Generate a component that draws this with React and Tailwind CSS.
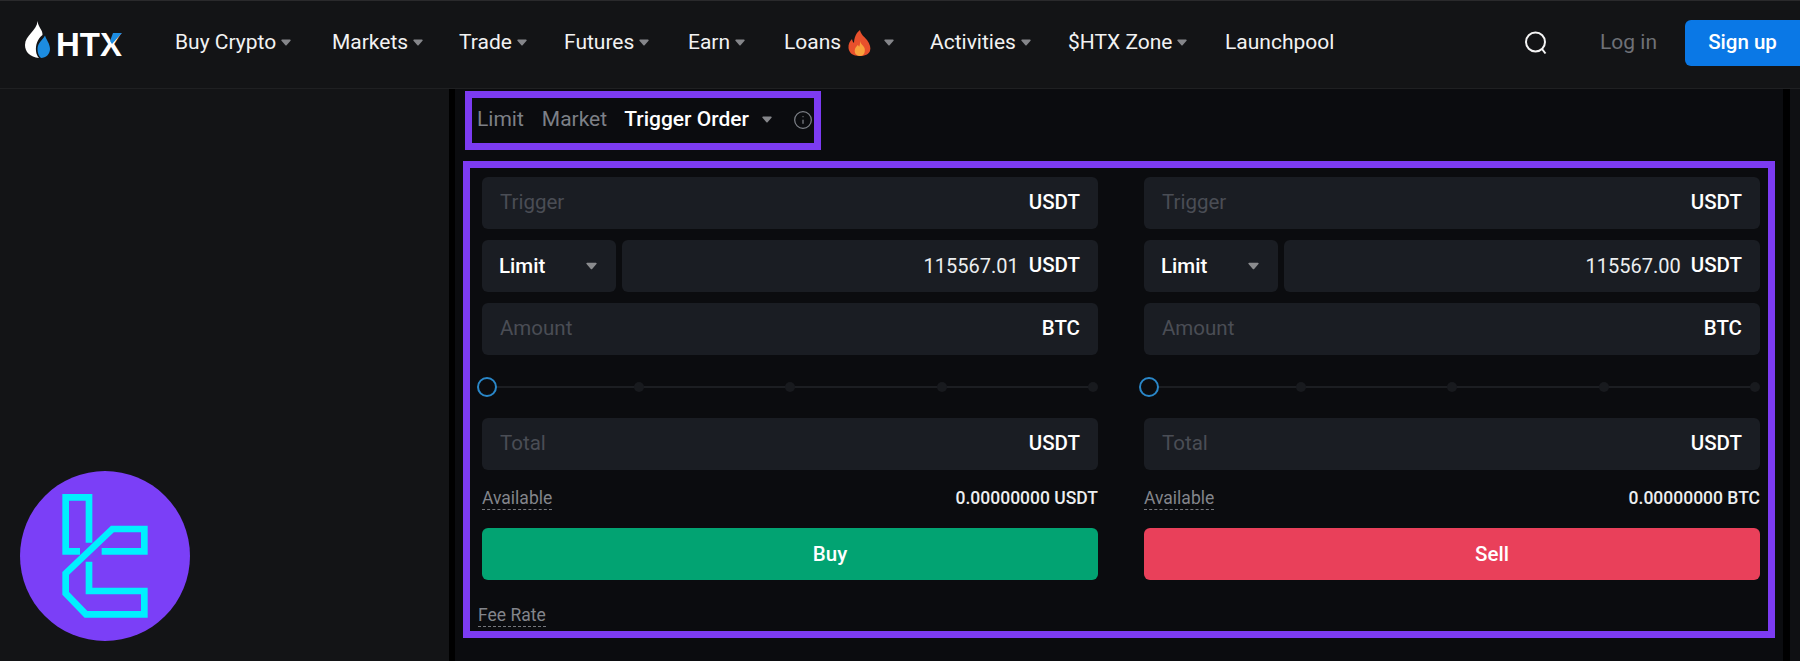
import { Info } from "lucide-react";

const navItems = [
  { label: "Buy Crypto", caret: true, width: "w-[157px]" },
  { label: "Markets", caret: true, width: "w-[127px]" },
  { label: "Trade", caret: true, width: "w-[105px]" },
  { label: "Futures", caret: true, width: "w-[124px]" },
  { label: "Earn", caret: true, width: "w-[96px]" },
  { label: "Loans", caret: true, hot: true, width: "w-[146px]" },
  { label: "Activities", caret: true, width: "w-[138px]" },
  { label: "$HTX Zone", caret: true, width: "w-[157px]" },
  { label: "Launchpool", width: "w-[110px]" },
];

function Caret({ className }) {
  return (
    <svg viewBox="0 0 10 7" className={className} fill="currentColor">
      <path d="M1 0.5h8a.7.7 0 0 1 .5 1.2L5.6 6.2a.8.8 0 0 1-1.2 0L.5 1.7A.7.7 0 0 1 1 .5z" />
    </svg>
  );
}

function Flame() {
  return (
    <svg viewBox="0 0 23 26" className="ml-[7px] h-[26px] w-[23px]">
      <path fill="#e8502c" d="M12 0c1 5 4 6 7 10 3 4 4 8 3 11-1 3-5 5-10.500 5C5 26 1 23 .5 18c-.4-4 1.500-7 3.500-9 .3 2 1 3 2 4C6 8 8 3 12 0z" />
      <path fill="#f9a23c" d="M12 11c.5 3 3 4 4.500 7 1 3 0 8-4.500 8s-6-4-5-7c.5-2 2-2.500 2.500-4 1 .5 1.500 1 1.500 2 .8-1.500 1.200-3.500 1-6z" />
    </svg>
  );
}

function Logo() {
  return (
    <div className="flex items-center">
      <svg viewBox="0 0 25 37" className="mt-[-6px] h-[37px] w-[25px]">
        <path fill="#ffffff" d="M12.500 0C13 6 18 9 17.500 14 12.500 18 10.500 24 11 30c.3 3 1.500 5.500 3 7C5 36 0 31 0 24 0 14 12 10 12.500 0z" />
        <path fill="#1c8ce0" d="M20 14.500c1 4 5 8 5 13.500 0 5-4 9-9 9-2.500-2-3.500-5.500-3.500-9 0-6 5-9 7.500-13.500z" />
      </svg>
      <div className="relative ml-[6px] mt-[4px] font-['Liberation_Sans',sans-serif] text-[33px] leading-[32px] font-bold text-white">
        HTX
        <svg viewBox="0 0 12 12" className="absolute right-0 top-[4px] h-3 w-3">
          <path fill="#1c8ce0" d="M3 0h9L2 11 0 8z" />
        </svg>
      </div>
    </div>
  );
}

function Field({ placeholder, value, unit, className = "" }) {
  return (
    <div className={`flex h-[52px] items-center justify-between rounded-md bg-[#1a1d23] pb-[2px] pl-[18px] pr-[18px] text-[20.500px] ${className}`}>
      {placeholder ? <span className="text-[#4a4d55]">{placeholder}</span> : <span />}
      <div className="flex items-center gap-[10px]">
        {value && <span className="pt-[2px] text-[20px] text-[#eceef0]">{value}</span>}
        <span className="font-medium text-white">{unit}</span>
      </div>
    </div>
  );
}

function Slider() {
  return (
    <div className="relative flex h-[63px] items-center justify-between">
      <div className="absolute left-[5px] right-[5px] top-[31px] h-[2px] bg-[#1c1e22]" />
      <div className="relative flex w-2.5 items-center justify-center">
        <div className="size-5 shrink-0 rounded-full border-2 border-[#2a87c8] bg-[#0b0c0f]" />
      </div>
      {[0, 1, 2, 3].map((i) => (
        <div key={i} className="relative size-2.5 rounded-full bg-[#181a1e]" />
      ))}
    </div>
  );
}

function OrderColumn({ price, unit, balance, action, actionClass }) {
  return (
    <div className="flex flex-col">
      <div className="flex flex-col gap-[11px]">
        <Field placeholder="Trigger" unit="USDT" />
        <div className="flex gap-[6px]">
          <div className="flex h-[52px] w-[134px] shrink-0 items-center justify-between rounded-md bg-[#1a1d23] pl-[17px] pr-[19px] text-[20.500px] font-medium text-white">
            Limit
            <Caret className="h-[8px] w-[11px] text-[#8a8b8e]" />
          </div>
          <Field value={price} unit="USDT" className="flex-1" />
        </div>
        <Field placeholder="Amount" unit={unit} />
      </div>
      <Slider />
      <Field placeholder="Total" unit="USDT" />
      <div className="mt-[17px] flex items-start justify-between">
        <span className="border-b border-dashed border-[#74767c] text-[17.500px] leading-[22px] text-[#83858b]">Available</span>
        <span className="text-[17.500px] leading-[22px] font-medium text-[#eceef0]">{balance}</span>
      </div>
      <button className={`mt-[18px] flex h-[52px] items-center justify-center rounded-md pl-[80px] text-[20.500px] font-medium text-white ${actionClass}`}>
        {action}
      </button>
    </div>
  );
}

export default function App() {
  return (
    <div className="flex h-[661px] w-[1800px] flex-col overflow-hidden bg-[#0f1013] font-['Roboto',sans-serif]">
      <header className="flex h-[89px] shrink-0 items-center border-t border-b border-t-[#2a2a2c] border-b-[#1f2022] bg-[#131416] pb-[4px] pl-[25px]">
        <Logo />
        <nav className="ml-[53px] flex items-center text-[21px] text-[#f2f2f2]">
          {navItems.map((item) => (
            <div key={item.label} className={`flex items-center ${item.width}`}>
              {item.label}
              {item.hot && <Flame />}
              {item.caret && <Caret className={`h-[7px] w-[10px] text-[#85868a] ${item.hot ? "ml-[13px]" : "ml-[5px]"}`} />}
            </div>
          ))}
        </nav>
        <div className="ml-auto flex items-center">
          <svg viewBox="0 0 24 24" className="h-6 w-6" fill="none" stroke="#f5f5f5" strokeWidth="2">
            <circle cx="11.500" cy="11" r="9.500" />
            <path d="M18 18l3.500 4.500" />
          </svg>
          <span className="ml-[52px] text-[21px] text-[#6f7177]">Log in</span>
          <button className="ml-[28px] h-[46px] w-[115px] rounded-l-md bg-[#0a78e6] text-[20.500px] font-medium text-white">Sign up</button>
        </div>
      </header>

      <div className="flex flex-1">
        <aside className="w-[449px] bg-[#131416]" />
        <div className="w-[6px] bg-black" />
        <main className="w-[1328px] bg-[#0b0c0f] px-2">
          <div className="ml-0.5 mt-0.5 flex h-[59px] w-[356px] items-center border-[7px] border-[#7c3bf2] pb-[2px] pl-[5px] text-[21px]">
            <span className="text-[#7d8087]">Limit</span>
            <span className="ml-[18px] text-[#7d8087]">Market</span>
            <span className="ml-[17px] font-medium text-white">Trigger Order</span>
            <Caret className="ml-[13px] h-[7px] w-[10px] text-[#85868a]" />
            <Info className="ml-[21px] size-[20px] text-[#7d8087]" strokeWidth={1.5} />
          </div>

          <div className="mt-[11px] flex h-[477px] flex-col border-[7px] border-[#7c3bf2] pl-[12px] pr-[8px] pt-[9px]">
            <div className="grid grid-cols-2 gap-x-[46px]">
              <OrderColumn price="115567.01" unit="BTC" balance="0.00000000 USDT" action="Buy" actionClass="bg-[#02a372]" />
              <OrderColumn price="115567.00" unit="BTC" balance="0.00000000 BTC" action="Sell" actionClass="bg-[#e9405a]" />
            </div>
            <div className="mt-[24px]">
              <span className="-ml-[4px] inline-block border-b border-dashed border-[#74767c] text-[17.500px] leading-[22px] text-[#83858b]">Fee Rate</span>
            </div>
          </div>
        </main>
        <div className="w-[7px] bg-black" />
      </div>

      {/* watermark badge */}
      <svg viewBox="60 63 510 510" className="absolute left-[20px] top-[471px] h-[170px] w-[170px]">
        <circle cx="315" cy="318" r="255" fill="#7b3ff7" />
        <g fill="none" stroke="#00f0ff" strokeWidth="20" strokeLinecap="butt">
          <path d="M267 278V142H197V304H240" />
          <path d="M305 304H433V237H337L197 370V430L258 493H433V423H267V335" />
        </g>
      </svg>
    </div>
  );
}
